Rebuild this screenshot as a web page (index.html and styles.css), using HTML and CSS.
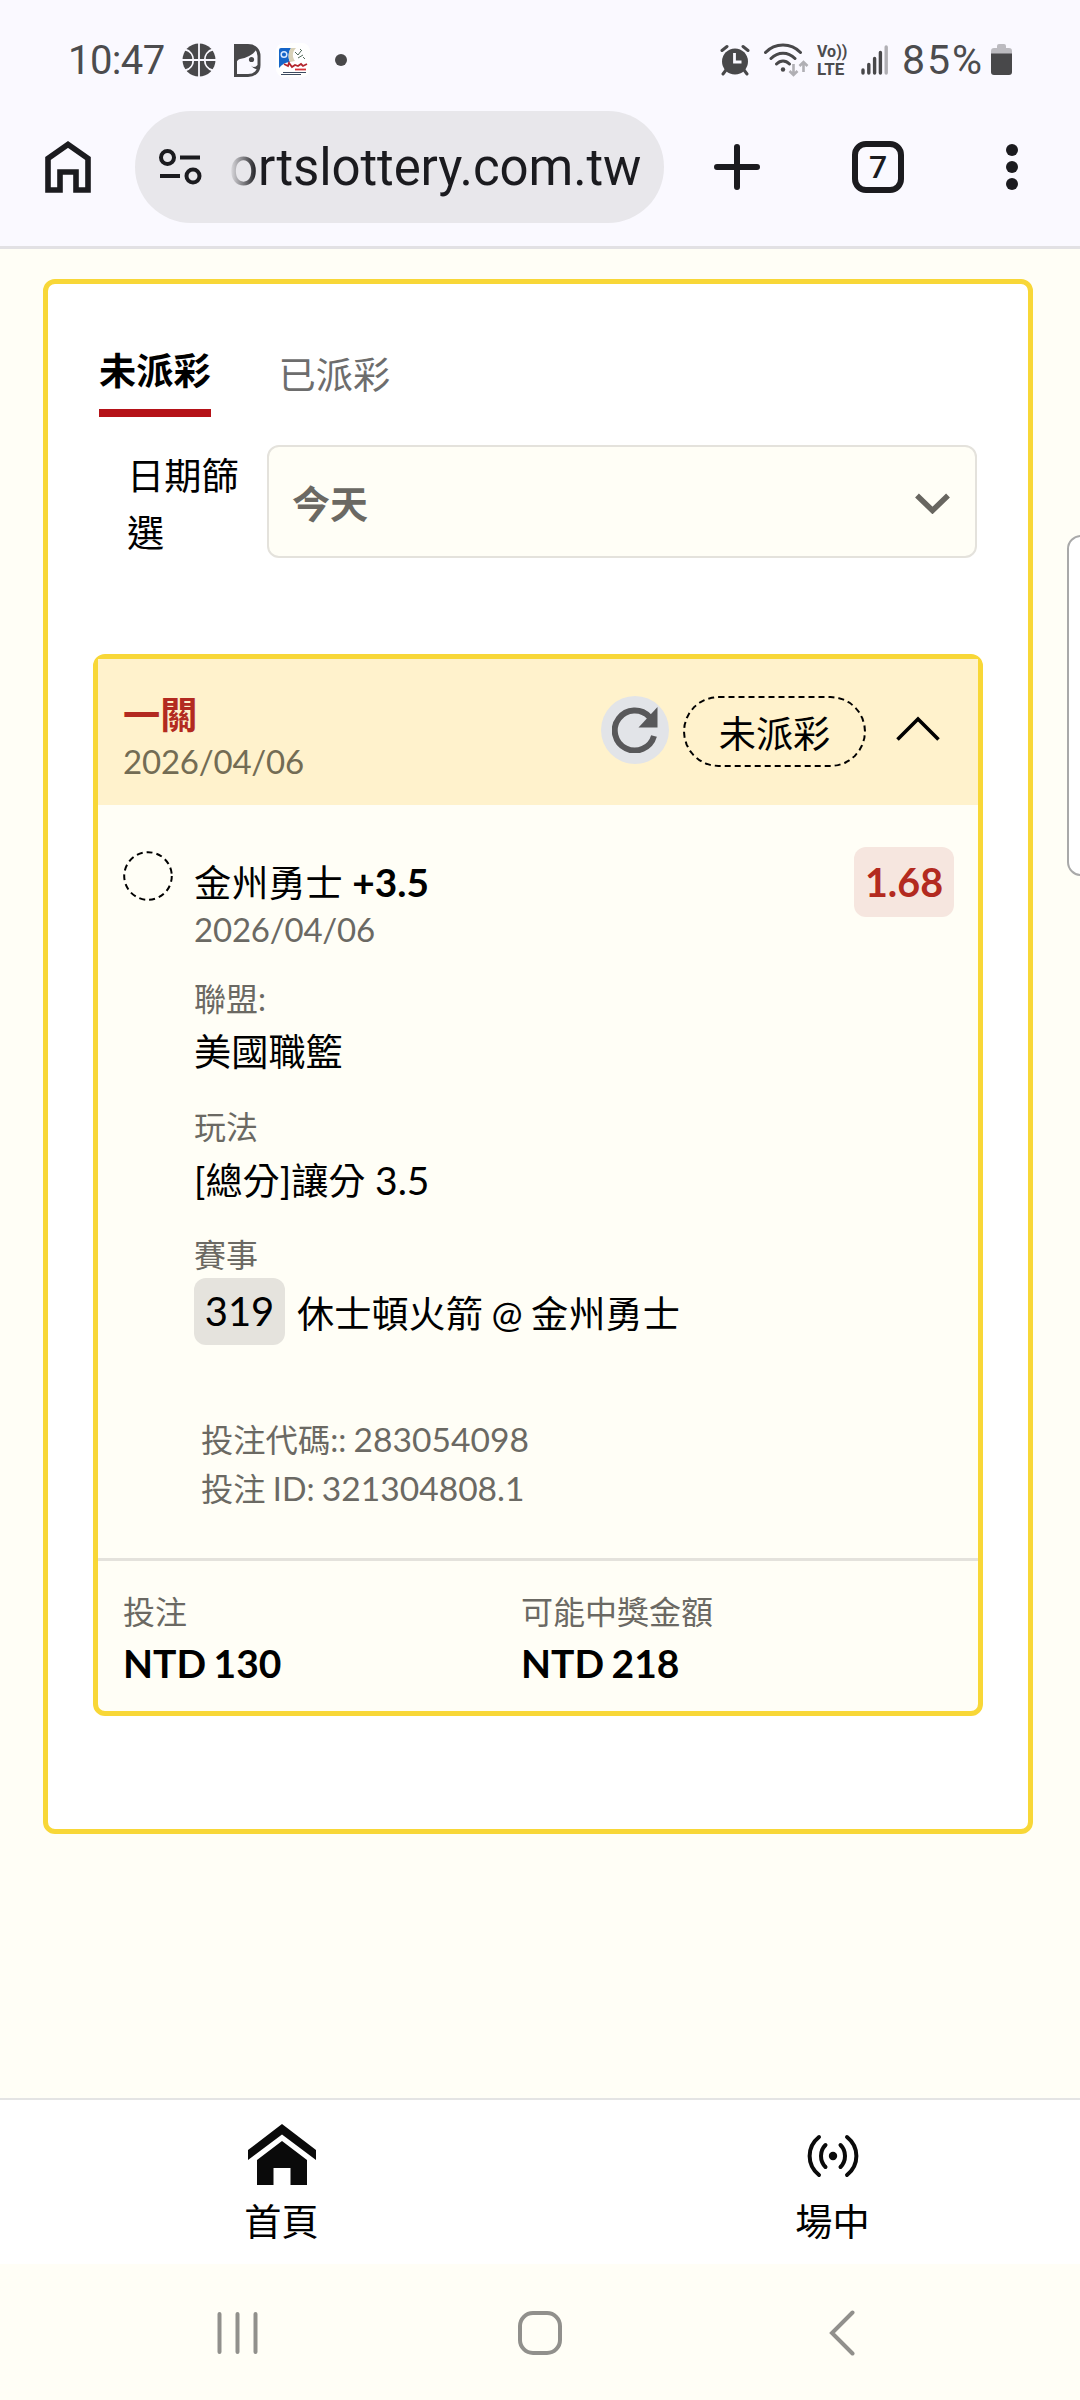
FILE: index.html
```html
<!DOCTYPE html>
<html lang="zh-Hant">
<head>
    <meta charset="UTF-8" />
    <meta name="viewport" content="width=device-width, initial-scale=1" />
    <title>投注紀錄</title>
    <link rel="stylesheet" href="styles.css">
</head>
<body>
    <header class="browser">
        <div class="status">
            <span class="clock">10:47</span>
            <svg class="ic-ball" width="34" height="34" viewBox="0 0 34 34">
                <circle cx="17" cy="17" r="16.5" fill="#48484a"/>
                <g fill="none" stroke="#faf9ff" stroke-width="1.8">
                    <path d="M17 0v34M0 17h34M3 6.500C14 9 14 25 3 27.500M31 6.500C20 9 20 25 31 27.500"/>
                </g>
            </svg>
            <svg class="ic-face" width="27" height="33" viewBox="0 0 27 33">
                <path d="M1.500 1.500H14C21 1.500 25 6 25 12v9c0 6-4 10.500-11 10.500H1.500z" fill="#faf9ff" stroke="#48484a" stroke-width="3"/>
                <path d="M1 1h13c4 0 7 2 8 5-3 5-10 8-16 9-2 .5-3 2-4 4H1z" fill="#48484a"/>
                <circle cx="17.500" cy="15.500" r="2.600" fill="#48484a"/>
                <path d="M17 21.500c2 2 4 2 6 0l2-1v5c-3 0-6-1-8-4z" fill="#48484a"/>
            </svg>
            <svg class="ic-app" width="34" height="34" viewBox="0 0 34 34">
                <rect width="34" height="34" rx="8" fill="#fff"/>
                <path d="M5 5h10c-3 5-3 10-1 14-4 0-8 2-11 6V7q0-2 2-2z" fill="#1565c8"/>
                <circle cx="8" cy="11.500" r="2.800" fill="none" stroke="#d8e8ff" stroke-width="1.500"/>
                <path d="M15 5c-3 4-3 10-1 14l5-1c-3-4-3-9 1-13z" fill="#d9d2b8"/>
                <path d="M19 9l3 3 3-4M22 15l5-3M27 14l2 2M24 6l2 2" fill="none" stroke="#526b5a" stroke-width="1"/>
                <path d="M8 21l4 2 1-3 3 4 3-2 3 1 3-2 2 2 4-2" fill="none" stroke="#b3262d" stroke-width="1.800"/>
                <path d="M19 26.500h11" stroke="#d8353b" stroke-width="1.800"/>
                <path d="M7 29.500h23M5 31.500h20" stroke="#3c4a60" stroke-width="1.200"/>
            </svg>
            <span class="more-dot"></span>
            <div class="status-right">
                <svg width="30" height="32" viewBox="0 0 30 32">
                    <circle cx="15" cy="17.500" r="13" fill="#48484a"/>
                    <path d="M2 6.500L7 2.500M28 6.500L23 2.500M6 26L3 30M24 26l3 4" stroke="#48484a" stroke-width="3" stroke-linecap="round"/>
                    <path d="M14.500 9v9h7" fill="none" stroke="#faf9ff" stroke-width="2.800"/>
                </svg>
                <svg class="ic-wifi" width="45" height="34" viewBox="0 0 45 34">
                    <g fill="none" stroke="#48484a" stroke-width="3" stroke-linecap="round">
                        <path d="M1.500 9.500C11-.5 27-.5 36.500 9.500M7 15.500c7-7 17-7 24 0M12.500 21c4-4 9-4 13 0"/>
                    </g>
                    <circle cx="19" cy="26.500" r="2.200" fill="#48484a"/>
                    <path d="M29.500 21v11M25.500 28l4 4 4-4M39.500 29V19M35.500 23l4-4 4 4" fill="none" stroke="#b0afb4" stroke-width="2.600"/>
                </svg>
                <div class="volte"><span>Vo))</span><span class="lte">LTE</span></div>
                <svg class="ic-signal" width="28" height="30" viewBox="0 0 28 30">
                    <g stroke="#48484a" stroke-width="3.400" stroke-linecap="round">
                        <path d="M2 25v3M7.800 19.500V28M13.600 13.500V28M19.400 7.500V28"/>
                        <path d="M25.200 2V28" stroke="#b0afb4"/>
                    </g>
                </svg>
                <span class="percent">85%</span>
                <svg class="ic-battery" width="21" height="32" viewBox="0 0 21 32">
                    <path d="M6 2q0-2 2-2h5q2 0 2 2v2h3q3 0 3 3v3H0V7q0-3 3-3h3z" fill="#bcbbc0"/>
                    <path d="M0 9.500h21V28q0 3-3 3H3q-3 0-3-3z" fill="#48484a"/>
                </svg>
            </div>
        </div>
        <div class="toolbar">
            <svg class="btn-home" width="46" height="52" viewBox="0 0 46 52">
                <path d="M3 49V17.500L23 3.500l20 14V49H31V31H15v18z" fill="none" stroke="#1b1b1f" stroke-width="5.600"/>
            </svg>
            <div class="omnibox">
                <svg width="43" height="36" viewBox="0 0 43 36">
                    <g fill="none" stroke="#1b1b1f" stroke-width="4">
                        <circle cx="8.500" cy="8.500" r="6.500"/>
                        <circle cx="34" cy="27" r="6.500"/>
                        <path d="M21 8.500h20M1 27h20"/>
                    </g>
                </svg>
                <span class="url">ortslottery.com.tw</span>
            </div>
            <svg class="btn-plus" width="46" height="46" viewBox="0 0 46 46">
                <path d="M23 3v40M3 23h40" stroke="#1b1b1f" stroke-width="6" stroke-linecap="round"/>
            </svg>
            <div class="tab-count">7</div>
            <svg class="btn-menu" width="12" height="46" viewBox="0 0 12 46">
                <g fill="#1b1b1f">
                    <circle cx="6" cy="6" r="6"/>
                    <circle cx="6" cy="23" r="6"/>
                    <circle cx="6" cy="40" r="6"/>
                </g>
            </svg>
        </div>
    </header>

    <main class="page">
        <section class="panel">
            <nav class="tabs">
                <a class="tab active">未派彩</a>
                <a class="tab">已派彩</a>
            </nav>
            <div class="filter">
                <label class="filter-label">日期篩選</label>
                <div class="select">
                    <span>今天</span>
                    <svg class="chevron" width="35" height="21" viewBox="0 0 35 21">
                        <path d="M2 2.500l15.500 15L33 2.500" fill="none" stroke="#686660" stroke-width="5.500"/>
                    </svg>
                </div>
            </div>

            <article class="bet">
                <div class="bet-head">
                    <div class="bet-title">
                        <strong>一關</strong>
                        <span class="date">2026/04/06</span>
                    </div>
                    <span class="reload">
                        <svg width="46" height="46" viewBox="0 0 46 46">
                            <path d="M37.500 10A20 20 0 1 0 42 29" fill="none" stroke="#58585a" stroke-width="6"/>
                            <path d="M45.500 0v20.500H26.500z" fill="#58585a"/>
                        </svg>
                    </span>
                    <span class="state">未派彩</span>
                    <svg class="caret" width="44" height="26" viewBox="0 0 44 26">
                        <path d="M1.500 23.500L22 3l20.500 20.500" fill="none" stroke="#000" stroke-width="3.600"/>
                    </svg>
                </div>
                <div class="bet-body">
                    <svg class="pending" width="50" height="50" viewBox="0 0 50 50">
                        <circle cx="25" cy="25" r="23.800" fill="none" stroke="#000" stroke-width="2" stroke-dasharray="6 4"/>
                    </svg>
                    <div class="detail">
                        <div class="pick">金州勇士 <b>+3.5</b></div>
                        <div class="date">2026/04/06</div>
                        <div class="field">
                            <div class="label">聯盟:</div>
                            <div class="value">美國職籃</div>
                        </div>
                        <div class="field">
                            <div class="label">玩法</div>
                            <div class="value">[總分]讓分 <span class="num">3.5</span></div>
                        </div>
                        <div class="field">
                            <div class="label">賽事</div>
                            <div class="event"><span class="event-no">319</span><span>休士頓火箭 @ 金州勇士</span></div>
                        </div>
                        <div class="codes">
                            <div>投注代碼:: <span class="code">283054098</span></div>
                            <div>投注 ID: <span class="code">321304808.1</span></div>
                        </div>
                    </div>
                    <span class="odds">1.68</span>
                </div>
                <div class="bet-foot">
                    <div>
                        <div class="label">投注</div>
                        <div class="amount">NTD 130</div>
                    </div>
                    <div>
                        <div class="label">可能中獎金額</div>
                        <div class="amount">NTD 218</div>
                    </div>
                </div>
            </article>
        </section>
    </main>
    <div class="edge-handle"></div>

    <nav class="bottom-nav">
        <a class="nav-item">
            <svg width="68" height="62" viewBox="0 0 68 62">
                <path d="M34 0L68 26V36L34 10.500 0 36V26z" fill="#0a0a0a"/>
                <path d="M34 17L59 36V61H42.500V44H25.500V61H9V36z" fill="#0a0a0a"/>
            </svg>
            <span>首頁</span>
        </a>
        <a class="nav-item">
            <svg width="52" height="62" viewBox="0 0 52 62">
                <g fill="none" stroke="#0a0a0a" stroke-width="4" stroke-linecap="round">
                    <path d="M12 13C-.5 23-.5 41 12 51M40 13c12.500 10 12.500 28 0 38M18.500 21c-6 6-6 16 0 22M33.500 21c6 6 6 16 0 22"/>
                </g>
                <circle cx="26" cy="32" r="4.200" fill="#0a0a0a"/>
            </svg>
            <span>場中</span>
        </a>
    </nav>
    <footer class="system-nav">
        <svg width="42" height="44" viewBox="0 0 42 44">
            <path d="M2.500 3v38M20.500 3v38M38.500 3v38" stroke="#91908c" stroke-width="4" stroke-linecap="round"/>
        </svg>
        <svg class="sys-home" width="44" height="44" viewBox="0 0 44 44">
            <rect x="2" y="2" width="40" height="40" rx="13" fill="none" stroke="#91908c" stroke-width="4"/>
        </svg>
        <svg width="26" height="46" viewBox="0 0 26 46">
            <path d="M23.500 2.500L3 23l20.500 20.500" fill="none" stroke="#91908c" stroke-width="4" stroke-linecap="round"/>
        </svg>
    </footer>
</body>
</html>
```
FILE: styles.css
```css
:root {
    --yellow: #f8d737;
    --cream: #fffef6;
    --muted: #6b6963;
    --red: #b32a20;
    --line: #e4e2dc;
    --chrome: #faf9ff;
}
* {
    box-sizing: border-box;
}
body {
    margin: 0;
    width: 1080px;
    height: 2400px;
    display: flex;
    flex-direction: column;
    position: relative;
    overflow: hidden;
    background-color: var(--cream);
    color: #000;
    font-family: Lato, "Noto Sans CJK TC", sans-serif;
    font-size: 37.2px;
}
svg {
    display: block;
    flex: none;
}

/* Status bar and browser toolbar */
.browser {
    height: 249px;
    background-color: var(--chrome);
    border-bottom: 3px solid #e2e1e4;
    font-family: Roboto, sans-serif;
}
.status {
    height: 111px;
    padding: 9px 68px 0 68px;
    display: flex;
    align-items: center;
    color: #4c4c4e;
    font-size: 40px;
}
.clock {
    width: 114px;
    letter-spacing: -0.6px;
}
.ic-face {
    margin-left: 18px;
}
.ic-app {
    margin-left: 15px;
}
.more-dot {
    width: 12px;
    height: 12px;
    margin-left: 25px;
    border-radius: 50%;
    background-color: #48484a;
}
.status-right {
    margin-left: auto;
    display: flex;
    align-items: center;
}
.ic-wifi {
    margin-left: 14px;
}
.volte {
    width: 32px;
    margin-left: 8px;
    display: flex;
    flex-direction: column;
    font-size: 16px;
    font-weight: 700;
    line-height: 18px;
}
.lte {
    font-size: 17px;
    line-height: 17px;
}
.ic-signal {
    margin-left: 12px;
}
.percent {
    width: 82px;
    margin-left: 13px;
    font-size: 41px;
    letter-spacing: 2px;
}
.ic-battery {
    margin-left: 7px;
}
.toolbar {
    height: 112px;
    padding-left: 45px;
    display: flex;
    align-items: center;
}
.omnibox {
    width: 529px;
    height: 112px;
    margin-left: 44px;
    padding-left: 24px;
    display: flex;
    align-items: center;
    border-radius: 56px;
    background-color: #e8e7eb;
}
.url {
    margin-left: 27px;
    padding-top: 2px;
    font-size: 51px;
    line-height: 60px;
    letter-spacing: -0.1px;
    color: transparent;
    background: linear-gradient(to right, #e8e7eb, #1b1b1f 28px);
    -webkit-background-clip: text;
    background-clip: text;
}
.btn-plus {
    margin-left: 50px;
}
.tab-count {
    width: 52px;
    height: 52px;
    margin-left: 92px;
    border: 6px solid #1b1b1f;
    border-radius: 14px;
    color: #1b1b1f;
    font-size: 32px;
    font-weight: 500;
    line-height: 41px;
    text-align: center;
}
.btn-menu {
    margin-left: 102px;
}

/* Bet list */
.page {
    flex: 1;
    padding: 30px 47px 0 43px;
}
.panel {
    height: 1555px;
    padding: 58px 45px 0 45px;
    border: 5px solid var(--yellow);
    border-radius: 12px;
    background-color: #fff;
}
.tabs {
    display: flex;
    align-items: flex-start;
    gap: 68px;
    padding-left: 6px;
}
.tab {
    margin-top: 4px;
    line-height: 57px;
    color: #6d6d6d;
}
.tab.active {
    margin-top: 0;
    padding-bottom: 10px;
    border-bottom: 8px solid #b51218;
    color: #000;
    font-weight: 700;
}
.filter {
    height: 113px;
    margin: 28px 6px 0 34px;
    display: flex;
}
.filter-label {
    width: 140px;
    padding-right: 27px;
    padding-top: 2px;
    line-height: 57px;
}
.select {
    flex: 1;
    height: 113px;
    padding: 0 25px 0 23px;
    display: flex;
    align-items: center;
    justify-content: space-between;
    border: 2px solid var(--line);
    border-radius: 12px;
    background-color: var(--cream);
    color: var(--muted);
    font-size: 38px;
    font-weight: 700;
}
.chevron {
    margin-top: 4px;
}
.bet {
    margin-top: 96px;
    height: 1062px;
    border: 5px solid var(--yellow);
    border-radius: 12px;
    background-color: var(--cream);
}
.bet-head {
    height: 146px;
    padding: 0 38px 0 25px;
    display: flex;
    align-items: center;
    background-color: #fff2cc;
}
.bet-title {
    flex: 1;
    display: flex;
    flex-direction: column;
    margin-top: 11px;
    line-height: 46px;
}
.bet-title strong {
    color: var(--red);
}
.date {
    color: var(--muted);
    font-size: 33px;
    line-height: 46px;
    letter-spacing: -0.2px;
}
.bet-title .date {
    color: #736c54;
}
.reload {
    width: 68px;
    height: 68px;
    margin-top: -5px;
    padding: 11px;
    border-radius: 50%;
    background-color: #e2e4e8;
}
.state {
    width: 183px;
    height: 71px;
    margin-top: -2px;
    margin-left: 14px;
    border: 2px dashed #000;
    border-radius: 36px;
    line-height: 71px;
    text-align: center;
}
.caret {
    margin-top: -7px;
    margin-left: 30px;
}
.bet-body {
    height: 753px;
    padding: 46px 24px 0 25px;
    display: flex;
    align-items: flex-start;
}
.detail {
    flex: 1;
    margin-left: 21px;
    padding-top: 8px;
}
.pick {
    line-height: 46px;
}
.pick b {
    font-size: 38.8px;
}
.field {
    margin-top: 22px;
    height: 106px;
}
.label {
    color: var(--muted);
    font-size: 32px;
    line-height: 50px;
}
.value {
    line-height: 56px;
}
.num {
    font-size: 39px;
}
.event {
    margin-top: -2px;
    display: flex;
    align-items: center;
    gap: 12px;
    word-spacing: -1px;
}
.event-no {
    width: 91px;
    height: 67px;
    border-radius: 12px;
    background-color: #e5e3dd;
    font-size: 40px;
    line-height: 66px;
    text-align: center;
}
.codes {
    margin-top: 79px;
    padding-left: 7px;
    color: var(--muted);
    font-size: 32.3px;
    line-height: 49px;
    word-spacing: -1px;
}
.code {
    font-size: 33.6px;
}
.odds {
    width: 100px;
    height: 70px;
    margin-top: -4px;
    border-radius: 12px;
    background-color: #f6e6df;
    color: var(--red);
    font-size: 39.5px;
    font-weight: 700;
    line-height: 69px;
    text-align: center;
}
.bet-foot {
    height: 153px;
    padding: 26px 25px 0;
    display: grid;
    grid-template-columns: 398px 1fr;
    border-top: 3px solid var(--line);
}
.amount {
    font-size: 39px;
    font-weight: 700;
    line-height: 52px;
    word-spacing: -2px;
}

/* Samsung edge panel, half off the right side */
.edge-handle {
    position: absolute;
    top: 535px;
    right: -20px;
    width: 33px;
    height: 341px;
    border: 2px solid #a9a9a9;
    border-radius: 14px;
    background-color: #fff;
}

/* Bottom bars */
.bottom-nav {
    width: 1102px;
    height: 166px;
    padding-left: 6px;
    padding-top: 24px;
    display: grid;
    grid-template-columns: 551px 551px;
    border-top: 2px solid #e4e4e4;
    background-color: #fff;
}
.nav-item {
    display: flex;
    flex-direction: column;
    align-items: center;
    line-height: 72px;
}
.system-nav {
    height: 136px;
    padding: 2px 225px 0 217px;
    display: flex;
    align-items: center;
    justify-content: space-between;
}
.sys-home {
    margin-right: 9px;
}
```
